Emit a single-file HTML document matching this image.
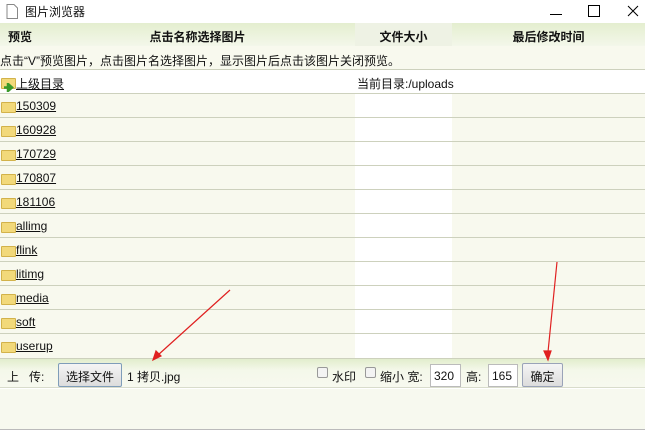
<!DOCTYPE html>
<html><head><meta charset="utf-8"><style>
*{margin:0;padding:0;box-sizing:border-box}
body{width:650px;height:432px;background:#fff;font-family:"Liberation Sans","Noto Sans CJK SC",sans-serif;font-size:12px;color:#111;position:relative;overflow:hidden}
.title{position:absolute;left:0;top:0;width:650px;height:23px;background:#fff}
.title .t{position:absolute;left:25px;top:3px;font-size:12px}
.hdr{position:absolute;top:23px;left:0;width:645px;height:23px;background:linear-gradient(#e4eecf,#f3f7ea);font-weight:bold;font-size:12px}
.hdr div{position:absolute;top:5px;text-align:center}
.body{position:absolute;top:46px;left:0;width:645px;height:312px;background:#f8f9ee}
.sizecol{position:absolute;left:355px;top:24px;width:97px;height:288px;background:#fff}
.row{position:absolute;left:0;width:645px;height:24px;border-top:1px solid #cdd1bd}
.row span{position:absolute;left:16px;top:5px;text-decoration:underline}
.fold{position:absolute;left:1px;top:8px;width:15px;height:11px;background:#f2d97a;border:1px solid #d2b24a;border-radius:1px}
.up{position:absolute;top:358px;left:0;width:645px;height:30px;border-top:1px solid #cdd1bd;border-bottom:1px solid #d8dccb;background:linear-gradient(#e2edcd,#f4f8ea 40%,#f7f9ef)}
.btn{position:absolute;border:1px solid #9aa3b8;border-radius:2px;background:linear-gradient(#f5f5f5,#dcdcdc);font-size:12px;text-align:center}
.inp{position:absolute;top:5px;height:23px;background:#fff;border:1px solid #bbb;padding:4px 3px}
.cb{position:absolute;top:8px;width:11px;height:11px;border:1px solid #999;background:#f3f3f3;border-radius:2px}
.bot{position:absolute;top:389px;left:0;width:645px;height:41px;background:#f7f9ef;border-bottom:1px solid #bbb}
</style></head><body>
<div class="title">
<svg style="position:absolute;left:6px;top:4px" width="12" height="15"><path d="M1 .5h7l3.5 3.5v10.5h-10.5z" fill="#fff" stroke="#888"/></svg>
<div class="t">图片浏览器</div>
<svg style="position:absolute;left:550px;top:4px" width="90" height="15"><path d="M0 10.5h12" stroke="#000"/><path d="M38.5 1.5h11v11h-11z" fill="none" stroke="#000"/><path d="M78 2l10 10M88 2l-10 10" stroke="#000"/></svg>
</div>
<div class="hdr">
<div style="left:0;width:40px">预览</div>
<div style="left:40px;width:315px">点击名称选择图片</div>
<div style="left:355px;width:97px;top:0;height:23px;padding-top:5px;background:#eef2e4">文件大小</div>
<div style="left:452px;width:193px">最后修改时间</div>
</div>
<div class="body">
<div style="position:absolute;top:6px;left:0">点击“V”预览图片，点击图片名选择图片，显示图片后点击该图片关闭预览。</div>
<div class="sizecol"></div>
<div class="row" style="top:23px;background:#fff"><div class="fold"></div><svg style="position:absolute;left:4px;top:13px" width="12" height="9"><path d="M0 4.5h6M4 1l4 3.5-4 3.5z" stroke="#3a9a2a" stroke-width="2.5" fill="#3a9a2a"/></svg><span>上级目录</span><div style="position:absolute;left:357px;top:5px;width:200px">当前目录:/uploads</div></div>
<div class="row" style="top:47px"><div class="fold"></div><span>150309</span></div>
<div class="row" style="top:71px"><div class="fold"></div><span>160928</span></div>
<div class="row" style="top:95px"><div class="fold"></div><span>170729</span></div>
<div class="row" style="top:119px"><div class="fold"></div><span>170807</span></div>
<div class="row" style="top:143px"><div class="fold"></div><span>181106</span></div>
<div class="row" style="top:167px"><div class="fold"></div><span>allimg</span></div>
<div class="row" style="top:191px"><div class="fold"></div><span>flink</span></div>
<div class="row" style="top:215px"><div class="fold"></div><span>litimg</span></div>
<div class="row" style="top:239px"><div class="fold"></div><span>media</span></div>
<div class="row" style="top:263px"><div class="fold"></div><span>soft</span></div>
<div class="row" style="top:287px"><div class="fold"></div><span>userup</span></div>
</div>
<div class="up">
<div style="position:absolute;left:7px;top:9px">上&nbsp;&nbsp;&nbsp;传:</div>
<div class="btn" style="left:58px;top:4px;width:64px;height:24px;padding-top:4px;border-color:#7f9db9">选择文件</div>
<div style="position:absolute;left:127px;top:9px">1 拷贝.jpg</div>
<div class="cb" style="left:317px"></div><div style="position:absolute;left:332px;top:9px">水印</div>
<div class="cb" style="left:365px"></div><div style="position:absolute;left:380px;top:9px">缩小 宽:</div>
<div class="inp" style="left:430px;width:31px">320</div>
<div style="position:absolute;left:466px;top:9px">高:</div>
<div class="inp" style="left:488px;width:30px">165</div>
<div class="btn" style="left:522px;top:4px;width:41px;height:24px;padding-top:4px">确定</div>
</div>
<div class="bot"></div>
<svg style="position:absolute;left:0;top:0" width="650" height="432"><g stroke="#e02020" stroke-width="1.2" fill="#e02020"><path d="M230 290L158 355"/><path d="M153 360l3-9 5 5z"/><path d="M557 262L548 352"/><path d="M548 360l-4-9h7z"/></g></svg>
</body></html>
